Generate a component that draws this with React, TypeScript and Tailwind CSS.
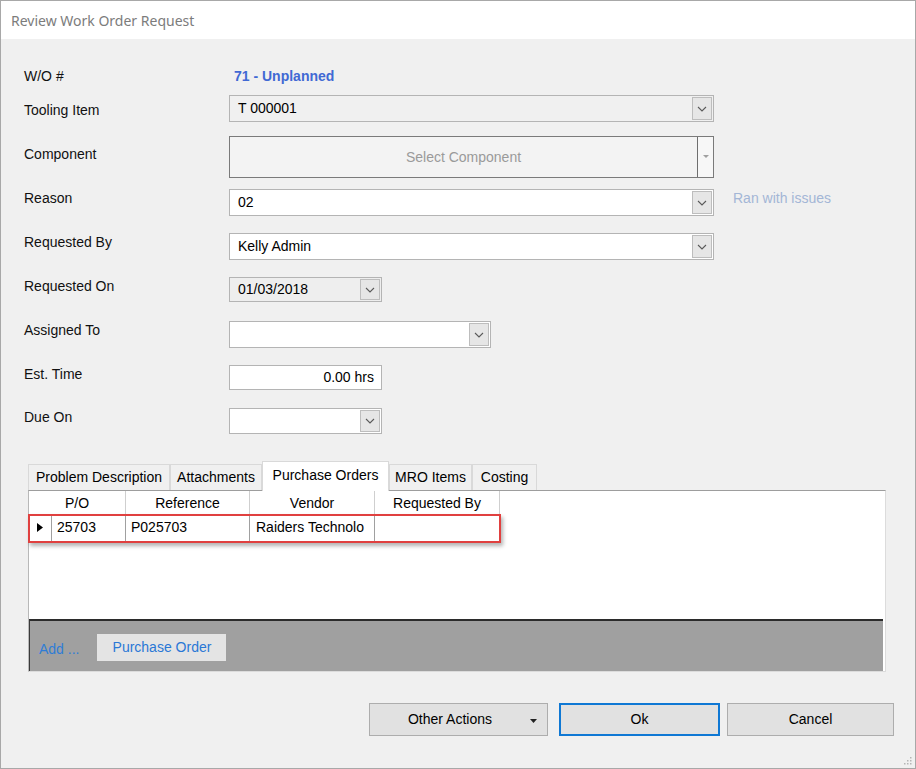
import React from "react";

function Chevron() {
  return (
    <svg width="10" height="6" viewBox="0 0 10 6">
      <path d="M1 1 L5 5 L9 1" fill="none" stroke="#5a5a5a" strokeWidth="1.1" />
    </svg>
  );
}

function Combo({
  w,
  h,
  bg,
  text,
  arrow = true,
  right = false,
}: {
  w: string;
  h: string;
  bg: string;
  text?: string;
  arrow?: boolean;
  right?: boolean;
}) {
  return (
    <div className={`${w} ${h} ${bg} border border-[#b4b4b4] flex items-stretch p-[1px]`}>
      <div className={`flex-1 flex items-center ${right ? "justify-end pr-[6px]" : "pl-[7px]"} text-black`}>
        {text}
      </div>
      {arrow && (
        <div className="w-[20px] border border-[#bdbdbd] bg-[#e6e6e6] flex items-center justify-center">
          <Chevron />
        </div>
      )}
    </div>
  );
}

function Row({
  label,
  h,
  labelMt = "mt-0",
  children,
}: {
  label: string;
  h: string;
  labelMt?: string;
  children: React.ReactNode;
}) {
  return (
    <div className={`flex items-start ${h}`}>
      <div className={`w-[205px] leading-[18px] ${labelMt} text-[#111]`}>{label}</div>
      {children}
    </div>
  );
}

export default function App() {
  const tabs = [
    { t: "Problem Description", w: "w-[142px]" },
    { t: "Attachments", w: "w-[92px]" },
    { t: "Purchase Orders", w: "w-[127px]", sel: true },
    { t: "MRO Items", w: "w-[83px]" },
    { t: "Costing", w: "w-[65px]" },
  ];
  return (
    <div className="w-[916px] h-[769px] border border-[#a8a8a8] bg-[#f0f0f0] flex flex-col font-['Liberation_Sans',Arial,sans-serif] text-[14px] relative overflow-hidden">
      {/* Title bar */}
      <div className="h-[38px] bg-white flex items-center pl-[10px] text-[#7c7c7c] text-[14px] font-['Noto_Sans',sans-serif]">
        Review Work Order Request
      </div>

      {/* Body */}
      <div className="pl-[23px] pt-[28px] flex flex-col">
        <div className="flex items-start h-[28px]">
          <div className="w-[205px] leading-[18px] text-[#111]">W/O #</div>
          <div className="pl-[5px] leading-[18px] font-bold text-[#4169d4]">71 - Unplanned</div>
        </div>

        <Row label="Tooling Item" h="h-[41px]" labelMt="mt-[6px]">
          <Combo w="w-[485px]" h="h-[27px]" bg="bg-[#f0f0f0]" text="T 000001" />
        </Row>

        <Row label="Component" h="h-[53px]" labelMt="mt-[9px]">
          <div className="w-[485px] h-[42px] border border-[#7a7a7a] flex">
            <div className="flex-1 bg-[#f3f3f3] flex items-center justify-center text-[#9a9a9a] border-r border-r-[#6e6e6e]">
              Select Component
            </div>
            <div className="w-[15px] bg-[#f7f7f7] flex items-center justify-center">
              <svg width="6" height="4" viewBox="0 0 6 4">
                <path d="M0 0 L6 0 L3 3 Z" fill="#a0a0a0" />
              </svg>
            </div>
          </div>
        </Row>

        <Row label="Reason" h="h-[44px]">
          <Combo w="w-[485px]" h="h-[27px]" bg="bg-white" text="02" />
          <div className="ml-[19px] leading-[18px] text-[#a3b6d6]">Ran with issues</div>
        </Row>

        <Row label="Requested By" h="h-[44px]">
          <Combo w="w-[485px]" h="h-[27px]" bg="bg-white" text="Kelly Admin" />
        </Row>

        <Row label="Requested On" h="h-[44px]">
          <Combo w="w-[153px]" h="h-[25px]" bg="bg-[#eeeeee]" text="01/03/2018" />
        </Row>

        <Row label="Assigned To" h="h-[44px]">
          <Combo w="w-[262px]" h="h-[27px]" bg="bg-white" />
        </Row>

        <Row label="Est. Time" h="h-[43px]">
          <Combo w="w-[153px]" h="h-[25px]" bg="bg-white" text="0.00 hrs" arrow={false} right />
        </Row>

        <Row label="Due On" h="h-[53px]">
          <Combo w="w-[153px]" h="h-[26px]" bg="bg-white" />
        </Row>
      </div>

      {/* Tabs */}
      <div className="ml-[27px] flex items-end h-[29px]">
        {tabs.map((tb) =>
          tb.sel ? (
            <div
              key={tb.t}
              className={`${tb.w} h-[30px] mb-[-1px] bg-white border border-[#d9d9d9] border-b-0 flex items-center justify-center text-black relative z-10 pb-[3px]`}
            >
              {tb.t}
            </div>
          ) : (
            <div
              key={tb.t}
              className={`${tb.w} h-[26px] bg-[#f0f0f0] border border-[#d9d9d9] border-b-0 flex items-center justify-center text-black`}
            >
              {tb.t}
            </div>
          )
        )}
      </div>

      {/* Panel */}
      <div className="ml-[27px] w-[858px] border-t border-t-[#9d9d9d] border-l border-l-[#b8b8b8] border-r border-r-[#dcdcdc] border-b border-b-[#dcdcdc] bg-white flex flex-col">
        <div className="h-[128px] relative">
          {/* header */}
          <div className="flex w-fit h-[24px] border-b border-b-[#cfcfcf]">
            <div className="w-[97px] border-r border-r-[#cfcfcf] flex items-center justify-center pt-[1px]">P/O</div>
            <div className="w-[124px] border-r border-r-[#cfcfcf] flex items-center justify-center pt-[1px]">Reference</div>
            <div className="w-[125px] border-r border-r-[#cfcfcf] flex items-center justify-center pt-[1px]">Vendor</div>
            <div className="w-[125px] border-r border-r-[#cfcfcf] flex items-center justify-center pt-[1px]">Requested By</div>
          </div>
          {/* row */}
          <div className="flex w-fit h-[26px]">
            <div className="w-[23px] border-r border-r-[#a0a0a0] flex items-center justify-center pb-[1px]">
              <svg width="6" height="9" viewBox="0 0 6 9">
                <path d="M0 0 L6 4.5 L0 9 Z" fill="#000" />
              </svg>
            </div>
            <div className="w-[74px] border-r border-r-[#a0a0a0] flex items-center pl-[5px] pb-[2px]">25703</div>
            <div className="w-[124px] border-r border-r-[#a0a0a0] flex items-center pl-[5px] pb-[2px]">P025703</div>
            <div className="w-[125px] border-r border-r-[#a0a0a0] flex items-center pl-[6px] pb-[2px]">Raiders Technolo</div>
            <div className="w-[125px] border-r border-r-[#a0a0a0]"></div>
          </div>
          {/* highlight */}
          <div className="absolute left-[-1px] top-[23px] w-[473px] h-[29px] border-[2.5px] border-[#e0403f] shadow-[2px_3px_4px_rgba(0,0,0,0.3)]"></div>
        </div>
        {/* gray bar */}
        <div className="h-[52px] mr-[2px] bg-[#a0a0a0] border-t-2 border-t-[#2b2b2b] border-l border-l-[#3a3a3a] flex items-center pl-[9px] gap-[18px]">
          <span className="text-[#2f7dd6] mt-[6px]">Add ...</span>
          <div className="h-[27px] w-[129px] bg-[#e4e4e4] flex items-center justify-center text-[#2a78d6] mt-[3px]">
            Purchase Order
          </div>
        </div>
      </div>

      {/* Buttons */}
      <div className="flex justify-end pr-[21px] mt-[31px]">
        <div className="w-[179px] h-[33px] bg-[#e1e1e1] border border-[#adadad] flex items-center relative">
          <span className="w-full text-center pr-[17px]">Other Actions</span>
          <svg className="absolute right-[10px] top-[15px]" width="7" height="4" viewBox="0 0 7 4">
            <path d="M0 0 L7 0 L3.5 4 Z" fill="#222" />
          </svg>
        </div>
        <div className="ml-[11px] w-[161px] h-[33px] bg-[#e1e1e1] border-2 border-[#0f78d4] flex items-center justify-center">
          Ok
        </div>
        <div className="ml-[7px] w-[167px] h-[33px] bg-[#e1e1e1] border border-[#adadad] flex items-center justify-center">
          Cancel
        </div>
      </div>

      {/* resize grip */}
      <svg className="absolute right-[3px] bottom-[3px]" width="10" height="10" viewBox="0 0 10 10">
        <rect x="8" y="2" width="1.5" height="1.5" fill="#b5b5b5" />
        <rect x="5" y="5" width="1.5" height="1.5" fill="#b5b5b5" />
        <rect x="8" y="5" width="1.5" height="1.5" fill="#b5b5b5" />
        <rect x="2" y="8" width="1.5" height="1.5" fill="#b5b5b5" />
        <rect x="5" y="8" width="1.5" height="1.5" fill="#b5b5b5" />
        <rect x="8" y="8" width="1.5" height="1.5" fill="#b5b5b5" />
      </svg>
    </div>
  );
}
